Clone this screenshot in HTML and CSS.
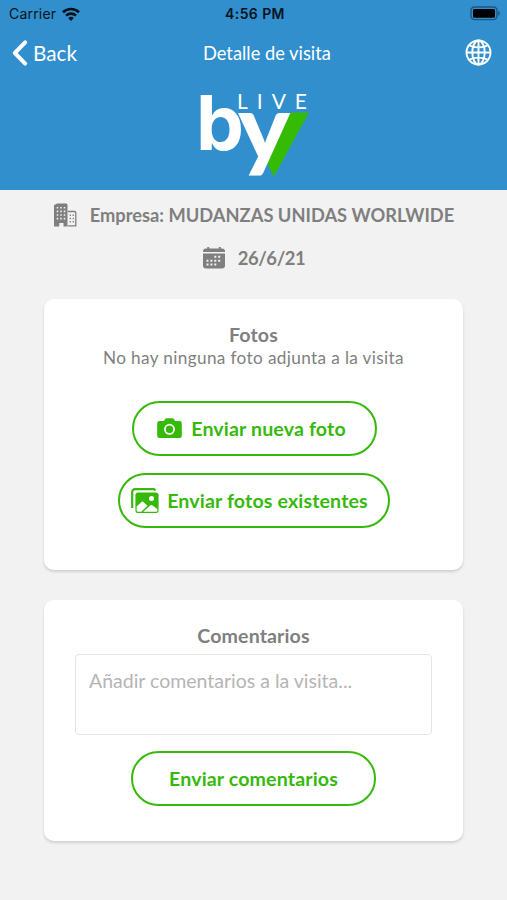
FILE: index.html
```html
<!DOCTYPE html>
<html lang="es">
<head>
    <meta charset="UTF-8">
    <meta name="viewport" content="width=device-width, initial-scale=1.0">
    <title>Detalle de visita</title>
    <link rel="stylesheet" href="styles.css">
</head>
<body>
    <header class="header">
        <div class="status-bar">
            <div class="carrier">
                <span>Carrier</span>
                <svg width="18" height="14" viewBox="0 0 18 14" fill="none" stroke="#06131d" stroke-width="2.6">
                    <path d="M1 5.200a11.500 11.500 0 0 1 16 0"/>
                    <path d="M4 8.600a7.200 7.200 0 0 1 10 0"/>
                    <path d="M9 14L6.200 11.100a4 4 0 0 1 5.600 0z" fill="#06131d" stroke="none"/>
                </svg>
            </div>
            <span class="time">4:56 PM</span>
            <svg class="battery" width="31" height="15" viewBox="0 0 31 15">
                <rect x="1" y="1" width="26" height="12.6" rx="3.5" fill="none" stroke="#1d567f" stroke-width="1.4"/>
                <rect x="3" y="3" width="22" height="8.8" rx="1.2" fill="#000"/>
                <path d="M28.300 5a2.600 2.600 0 0 1 0 4.800z" fill="#1d567f"/>
            </svg>
        </div>
        <nav class="nav">
            <a class="back">
                <svg width="16" height="26" viewBox="0 0 16 26" fill="none" stroke="#fff" stroke-width="4" stroke-linecap="round" stroke-linejoin="round">
                    <path d="M13.200 2.400L2.800 13l10.400 10.600"/>
                </svg>
                <span>Back</span>
            </a>
            <h1>Detalle de visita</h1>
            <svg class="globe" width="27" height="27" viewBox="0 0 27 27" fill="none" stroke="#fff" stroke-width="1.9">
                <circle cx="13.5" cy="13.5" r="12"/>
                <ellipse cx="13.5" cy="13.5" rx="6.2" ry="12"/>
                <path d="M13.500 1.500v24M1.500 13.500h24M4.800 6.600c5 2.400 12.400 2.400 17.400 0M4.800 20.400c5-2.400 12.400-2.400 17.400 0"/>
            </svg>
        </nav>
        <svg class="logo" width="110" height="86" viewBox="0 0 110 86">
            <path d="M91 20.500h19L75 84.500 67 69z" fill="#36bb05"/>
            <text class="logo-letter logo-b" x="-3" y="58" textLength="48" lengthAdjust="spacingAndGlyphs">b</text>
            <text class="logo-letter logo-y" x="39" y="68" textLength="52" lengthAdjust="spacingAndGlyphs">y</text>
            <text class="logo-live" x="38" y="17" textLength="70">LIVE</text>
        </svg>
    </header>

    <section class="info">
        <div class="info-row">
            <svg width="24" height="24" viewBox="0 0 24 24">
                <path d="M2.500 1.500L4 .5h9.500l1 1v22h-4V20H6.300v3.500H1V2z" fill="#7f7f7f"/>
                <path d="M15 8.500h6.500a1.300 1.300 0 0 1 1.300 1.300v13H15" fill="none" stroke="#7f7f7f" stroke-width="1.300"/>
                <path d="M4.500 4v14M8 4v14M11.500 4v14" stroke="#f3f3f3" stroke-width="1.500" stroke-dasharray="1.600 2"/>
                <path d="M17.300 11.500v9M20.300 11.500v9" stroke="#7f7f7f" stroke-width="1.300" stroke-dasharray="1.600 1.600"/>
            </svg>
            <span class="company">Empresa: MUDANZAS UNIDAS WORLWIDE</span>
        </div>
        <div class="info-row date-row">
            <svg width="22" height="22" viewBox="0 0 22 22">
                <path d="M3 1.500h1.200V0h2v1.500h9.600V0h2v1.500H19a3 3 0 0 1 3 3V5H0v-.5a3 3 0 0 1 3-3z" fill="#7f7f7f"/>
                <path d="M0 6.500h22v12a3 3 0 0 1-3 3H3a3 3 0 0 1-3-3z" fill="#7f7f7f"/>
                <path d="M11.300 9.800h7.500M3.500 13.700h15M3.500 17.500h11" stroke="#f3f3f3" stroke-width="2" stroke-dasharray="2 1.900"/>
            </svg>
            <span class="date">26/6/21</span>
        </div>
    </section>

    <main>
        <section class="card photos">
            <h2>Fotos</h2>
            <p>No hay ninguna foto adjunta a la visita</p>
            <button class="btn btn-camera">
                <svg width="25" height="21" viewBox="0 0 25 21">
                    <path d="M2.500 3h4.300l1.500-2.200Q8.800.3 9.500.3h6q.7 0 1.200.5L18.200 3h4.300A2.300 2.300 0 0 1 24.800 5.300v12.400a2.300 2.300 0 0 1-2.300 2.300h-20A2.300 2.300 0 0 1 .2 17.700V5.300A2.300 2.300 0 0 1 2.500 3z" fill="#36b90b"/>
                    <circle cx="12.500" cy="11.300" r="4.600" fill="none" stroke="#fff" stroke-width="1.700"/>
                </svg>
                <span>Enviar nueva foto</span>
            </button>
            <button class="btn btn-gallery">
                <svg width="28" height="26" viewBox="0 0 28 26">
                    <path d="M1.200 20V4a2.800 2.800 0 0 1 2.800-2.800h18.500A2 2 0 0 1 24.300 2.500" fill="none" stroke="#36b90b" stroke-width="2.200"/>
                    <rect x="4.400" y="4.500" width="23.200" height="20.500" rx="2.800" fill="#36b90b"/>
                    <circle cx="20.500" cy="10.500" r="2.500" fill="#fff"/>
                    <path d="M5.600 18.500l5.200-4.700q.7-.6 1.400 0l4.300 3.900-6.300 6.100H7a1.400 1.400 0 0 1-1.400-1.400zM12.200 23.800l7.300-6.600q.8-.6 1.600 0l5.300 3.800v1.400a1.400 1.400 0 0 1-1.400 1.400z" fill="#fff"/>
                </svg>
                <span>Enviar fotos existentes</span>
            </button>
        </section>

        <section class="card comments">
            <h2>Comentarios</h2>
            <textarea placeholder="Añadir comentarios a la visita..."></textarea>
            <button class="btn btn-comments">Enviar comentarios</button>
        </section>
    </main>
</body>
</html>
```
FILE: styles.css
```css
* {
    box-sizing: border-box;
}
body {
    margin: 0;
    height: 900px;
    overflow: hidden;
    background-color: #f2f2f2;
    font-family: Lato, sans-serif;
    color: #7f7f7f;
}
svg {
    display: block;
    flex-shrink: 0;
    overflow: visible;
}
h1, h2, p {
    margin: 0;
}

.header {
    height: 190px;
    background-color: #318fce;
    color: #fff;
}
.status-bar {
    display: grid;
    grid-template-columns: 1fr auto 1fr;
    align-items: center;
    height: 27px;
    padding: 0 6px 0 9px;
    font-family: Inter, sans-serif;
    font-size: 14px;
    color: #06131d;
}
.carrier {
    display: flex;
    align-items: center;
    gap: 6px;
    letter-spacing: 0.2px;
}
.time {
    font-weight: 600;
    letter-spacing: 0.4px;
}
.battery {
    justify-self: end;
}
.nav {
    display: grid;
    grid-template-columns: 191px 1fr auto;
    align-items: center;
    height: 51px;
    padding: 0 15px 0 12px;
}
.back {
    display: flex;
    align-items: center;
    gap: 5px;
    font-size: 20.8px;
}
.nav h1 {
    font-size: 18.3px;
    font-weight: 400;
}
.logo {
    margin: 14px 0 0 199px;
}
.logo-letter {
    fill: #fff;
}
.logo-b {
    font-family: Inter, sans-serif;
    font-size: 76px;
    font-weight: 700;
}
.logo-y {
    font-size: 92px;
    font-weight: 900;
}
.logo-live {
    font-size: 21px;
    font-weight: 400;
    fill: #fff;
}

.info {
    height: 109px;
    padding-top: 13px;
}
.info-row {
    display: flex;
    align-items: center;
    justify-content: center;
    gap: 13px;
    height: 24px;
    font-size: 18.3px;
    font-weight: 700;
}
.date-row {
    margin-top: 19px;
    padding-left: 1px;
    letter-spacing: -0.4px;
}
.date {
    font-size: 18.4px;
}

.card {
    display: flex;
    flex-direction: column;
    align-items: center;
    width: 419px;
    margin: 0 auto 30px;
    border-radius: 10px;
    background-color: #fff;
    box-shadow: 0 2px 3px rgba(0, 0, 0, 0.14);
}
.photos {
    height: 271px;
    padding-top: 24px;
}
.comments {
    height: 241px;
    padding-top: 24px;
}
.card h2 {
    font-size: 19.6px;
    line-height: 24px;
    letter-spacing: 0.1px;
}
.card p {
    margin-bottom: 32px;
    font-size: 17.2px;
    line-height: 22px;
    letter-spacing: 0.36px;
}
.btn {
    display: flex;
    align-items: center;
    justify-content: center;
    gap: 9px;
    width: 245px;
    height: 55px;
    padding: 0;
    border: 2px solid #36b90b;
    border-radius: 28px;
    background-color: #fff;
    color: #36b90b;
    font-family: inherit;
    font-size: 19.6px;
    font-weight: 700;
    letter-spacing: 0.14px;
}
.btn-camera {
    margin-left: 2px;
    padding-right: 6px;
}
.btn-gallery {
    gap: 8px;
    width: 272px;
    margin-top: 17px;
    padding-right: 8px;
}
.btn-comments {
    margin-top: 16px;
}
textarea {
    width: 357px;
    height: 81px;
    margin-top: 6px;
    padding: 14px 13px;
    border: 1px solid #e4e4e4;
    border-radius: 4px;
    resize: none;
    font-family: inherit;
    font-size: 19.5px;
}
textarea::placeholder {
    color: #b5b5b5;
}
```
